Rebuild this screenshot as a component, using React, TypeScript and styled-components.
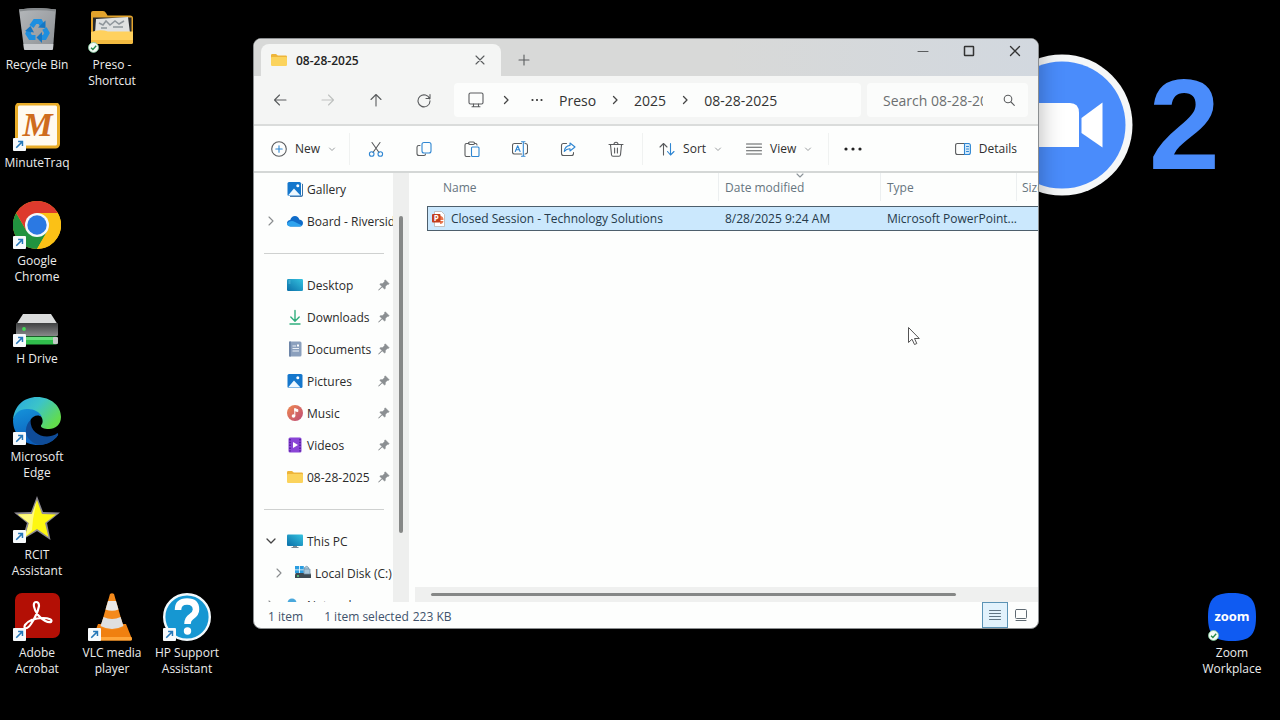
import React from "react";
import styled, { createGlobalStyle, css } from "styled-components";

const GlobalStyle = createGlobalStyle`
  *, *::before, *::after { box-sizing: border-box; }
  body {
    margin: 0;
    background: #000;
    font-family: "Open Sans", "Noto Sans", sans-serif;
    font-size: 12px;
    color: #2b2b2b;
  }
  button, input { font: inherit; color: inherit; }
  svg { display: block; flex: none; }
`;

/* ---------- Desktop ---------- */

const Desktop = styled.main`
  position: relative;
  display: flex;
  justify-content: space-between;
  align-items: flex-start;
  min-height: 100vh;
  overflow: hidden;
  background: #000;
`;

const ShortcutGrid = styled.div<{ $edge?: boolean }>`
  display: grid;
  grid-auto-flow: column;
  grid-template-rows: repeat(7, 98px);
  grid-auto-columns: 74px;
  column-gap: 1px;
  ${(p) => p.$edge && css`margin-right: 11px;`}
`;

const ShortcutButton = styled.button<{ $row: number; $col: number }>`
  grid-row: ${(p) => p.$row};
  grid-column: ${(p) => p.$col};
  display: flex;
  flex-direction: column;
  align-items: center;
  gap: 4px;
  padding: 5px 0 0;
  border: 0;
  background: none;
  color: #ececec;
  line-height: 16px;
  text-align: center;
`;

const IconFrame = styled.span`
  position: relative;
  display: block;
  width: 48px;
  height: 48px;
`;

const Badge = styled.span`
  position: absolute;
  left: 0;
  bottom: 0;
`;

const ShortcutLabel = styled.span`
  white-space: pre;
`;

const Wallpaper = styled.div`
  position: absolute;
  top: 54px;
  right: 60px;
  display: flex;
  align-items: center;
  gap: 16px;
`;

const RoomNumber = styled.span`
  font-family: "Liberation Sans Narrow", "Liberation Sans", sans-serif;
  font-weight: 700;
  font-size: 128px;
  line-height: 142px;
  color: #4a8cfb;
`;

/* ---------- Window ---------- */

const Window = styled.section`
  position: absolute;
  top: 38px;
  right: 241px;
  bottom: 91px;
  left: 253px;
  display: flex;
  flex-direction: column;
  border: 1px solid #8b8e90;
  border-radius: 8px;
  overflow: hidden;
  background: #fdfefd;
  box-shadow: 0 0 24px rgba(0, 0, 0, 0.3);
`;

const TitleBar = styled.header`
  flex: none;
  display: flex;
  align-items: flex-end;
  height: 37px;
  padding-left: 7px;
  background: linear-gradient(90deg, #d8d9d8 60%, #d2d8df);
`;

const Tab = styled.div`
  display: flex;
  align-items: center;
  width: 240px;
  height: 32px;
  padding: 0 10px;
  gap: 9px;
  border-radius: 8px 8px 0 0;
  background: #f4f5f4;
  font-weight: 600;
  color: #222;
`;

const TabTitle = styled.span`
  flex: 1;
`;

const PlainButton = styled.button<{ $w: number; $h: number }>`
  display: inline-flex;
  align-items: center;
  justify-content: center;
  flex: none;
  width: ${(p) => p.$w}px;
  height: ${(p) => p.$h}px;
  padding: 0;
  border: 0;
  background: none;
`;

const CaptionButtons = styled.div`
  display: flex;
  align-self: flex-start;
  margin-left: auto;
`;

const NavBar = styled.nav`
  flex: none;
  display: flex;
  align-items: center;
  height: 50px;
  padding: 0 10px 0 2px;
  border-bottom: 2px solid #dadcdb;
  background: #f4f5f4;
`;

const AddressBar = styled.div`
  flex: 1;
  display: flex;
  align-items: center;
  height: 34px;
  margin: 0 6px;
  padding-left: 8px;
  border-radius: 4px;
  background: #fcfdfc;
  overflow: hidden;
`;

const Crumb = styled.a`
  padding: 0 7px;
  font-size: 14px;
  color: #333;
  text-decoration: none;
  white-space: nowrap;
`;

const SearchBox = styled.label`
  display: flex;
  align-items: center;
  gap: 20px;
  width: 161px;
  height: 34px;
  padding: 0 13px 0 16px;
  border-radius: 4px;
  background: #fbfcfb;
`;

const SearchInput = styled.input`
  flex: 1;
  min-width: 0;
  padding: 0;
  border: 0;
  outline: 0;
  background: none;
  font-size: 14px;
  &::placeholder { color: #6c6f70; opacity: 1; }
`;

const Toolbar = styled.div`
  flex: none;
  display: flex;
  align-items: center;
  height: 47px;
  border-bottom: 2px solid #d4d7d6;
  background: #fdfefd;
`;

const ToolGroup = styled.div<{ $pad: string; $end?: boolean }>`
  display: flex;
  align-items: center;
  gap: 24px;
  padding: ${(p) => p.$pad};
  ${(p) => (p.$end ? css`margin-left: auto;` : css`border-right: 1px solid #f0f2f1;`)}
`;

const ToolButtons = styled.div`
  display: flex;
`;

const ToolButton = styled.button`
  display: flex;
  align-items: center;
  gap: 8px;
  height: 32px;
  padding: 0;
  border: 0;
  background: none;
  color: #2f2f2f;
`;

const Body = styled.div`
  flex: 1;
  display: flex;
  min-height: 0;
`;

const Sidebar = styled.aside`
  flex: none;
  width: 139px;
  overflow: hidden;
`;

const TreeList = styled.ul`
  margin: 0;
  padding: 0;
  list-style: none;
`;

const TreeRow = styled.li<{ $depth?: number }>`
  display: flex;
  align-items: center;
  height: 32px;
  padding-left: ${(p) => 9 + (p.$depth || 0) * 8}px;
  white-space: nowrap;
`;

const TreeChevron = styled.span`
  flex: none;
  width: 24px;
`;

const TreeLink = styled.a`
  flex: 1;
  display: flex;
  align-items: center;
  gap: 4px;
  min-width: 0;
  color: #2b2b2b;
  text-decoration: none;
  overflow: hidden;
`;

const PinSlot = styled.span`
  flex: none;
  width: 15px;
`;

const TreeDivider = styled.li`
  display: flex;
  align-items: center;
  height: 32px;
  padding: 0 9px 0 10px;
  &::before { content: ""; flex: 1; height: 1px; background: #cfd1d0; }
`;

const SideScroll = styled.div`
  flex: none;
  display: flex;
  justify-content: center;
  width: 16px;
  padding: 43px 0 69px;
  background: #eeefee;
`;

const ThumbV = styled.div`
  width: 4px;
  border-radius: 2px;
  background: #868887;
`;

const Main = styled.div`
  flex: 1;
  display: flex;
  flex-direction: column;
  min-width: 0;
  padding-left: 6px;
`;

const TableArea = styled.div`
  flex: 1;
  padding-left: 12px;
  overflow: hidden;
`;

const FileTable = styled.table`
  width: 690px;
  table-layout: fixed;
  border-collapse: separate;
  border-spacing: 0;
`;

const HeadCell = styled.th<{ $w: number; $pad: number }>`
  position: relative;
  width: ${(p) => p.$w}px;
  height: 33px;
  padding: 0 0 4px ${(p) => p.$pad}px;
  font-weight: 400;
  text-align: left;
  color: #66757f;
  background: linear-gradient(#eceff0, #eceff0) right top / 1px 28px no-repeat;
`;

const SortMark = styled.span`
  position: absolute;
  top: 0;
  left: 50%;
  margin-left: -4px;
`;

const Cell = styled.td<{ $pad: number }>`
  height: 25px;
  padding: 0 0 0 ${(p) => p.$pad}px;
  border-top: 1px solid #4d5f6c;
  border-bottom: 1px solid #4d5f6c;
  background: #cbe8fd;
  color: #263a4a;
  white-space: nowrap;
  &:first-child { border-left: 1px solid #4d5f6c; }
`;

const FileName = styled.span`
  display: flex;
  align-items: center;
  gap: 4px;
`;

const BottomScroll = styled.div`
  flex: none;
  display: flex;
  align-items: center;
  height: 15px;
  padding: 0 82px 0 16px;
  background: #eff0ef;
`;

const ThumbH = styled.div`
  flex: 1;
  height: 3px;
  border-radius: 2px;
  background: #858786;
`;

const StatusBar = styled.footer`
  flex: none;
  display: flex;
  align-items: center;
  height: 26px;
  padding: 0 4px 0 14px;
  color: #40526b;
`;

const StatusText = styled.span<{ $after: number }>`
  padding-top: 2px;
  margin-right: ${(p) => p.$after}px;
`;

const ViewButton = styled.button<{ $on?: boolean }>`
  display: flex;
  align-items: center;
  justify-content: center;
  width: 26px;
  height: 26px;
  padding: 0;
  border: 1px solid ${(p) => (p.$on ? "#5b93b5" : "transparent")};
  background: ${(p) => (p.$on ? "#e2f2fc" : "none")};
`;

const ViewButtons = styled.div`
  display: flex;
  margin-left: auto;
`;

const Cursor = styled.svg`
  position: absolute;
  top: 326px;
  left: 907px;
`;

/* ---------- Small icons ---------- */

type StrokeProps = { w?: number; h?: number; c?: string; sw?: number; children: React.ReactNode };
const Stroke = ({ w = 16, h = 16, c = "#5a5c5e", sw = 1.1, children }: StrokeProps) => (
  <svg width={w} height={h} viewBox={`0 0 ${w} ${h}`} fill="none" stroke={c} strokeWidth={sw} strokeLinecap="round" strokeLinejoin="round" aria-hidden="true">
    {children}
  </svg>
);

const ChevronDown = () => <Stroke w={8} h={8} c="#9a9d9f" sw={1}><path d="M1.5 3 4 5.5 6.500 3" /></Stroke>;
const ChevronRight = () => <Stroke w={8} h={12} c="#444" sw={1.3}><path d="M2.500 2.500l3.500 3.500-3.500 3.500" /></Stroke>;
const BLUE = "#2f86d2";

const FolderIcon = () => (
  <svg width="16" height="16" viewBox="0 0 16 16" aria-hidden="true">
    <path d="M0 3.200Q0 2 1.200 2H5l1.800 1.600H14.800Q16 3.600 16 4.800V8H0z" fill="#eeb53a" />
    <path d="M0 6Q0 5 1 5H15Q16 5 16 6V12.800Q16 14 14.800 14H1.200Q0 14 0 12.800z" fill="#fbd35c" />
  </svg>
);

const PictureIcon = ({ stacked }: { stacked?: boolean }) => (
  <svg width="16" height="16" viewBox="0 0 16 16" aria-hidden="true">
    {stacked && <path d="M14 2.500H15.200V14.500H3V15.800H14.500Q16 15.800 16 14V3z" fill="#0c4f8f" />}
    <rect x="0.500" y="1" width={stacked ? 13.5 : 15} height="14" rx="1.500" fill="#1577cc" />
    <path d="M1 14.500 7 7.500 13.500 14.500z" fill="#eef8ff" />
    <circle cx="10.800" cy="4.800" r="1.500" fill="#fff" />
  </svg>
);

const CloudIcon = () => (
  <svg width="16" height="16" viewBox="0 0 16 16" aria-hidden="true">
    <path d="M3.500 13.500Q0 13 0 10 .3 7.300 3.200 7 4.500 3 8 3q3.300.2 4.300 3.500Q16 7 16 10q-.2 3.300-3.200 3.500z" fill="#0f6cc9" />
    <path d="M3.500 13.500Q0 13 0 10.500 4 6.500 8 9l7 3.500q-.8 1-2.200 1z" fill="#2ea3ee" />
  </svg>
);

const DesktopIcon = () => (
  <svg width="16" height="16" viewBox="0 0 16 16" aria-hidden="true">
    <defs><linearGradient id="dk" x1="0" y1="1" x2="1" y2="0"><stop stopColor="#0b6fa8" /><stop offset="1" stopColor="#35c3e0" /></linearGradient></defs>
    <rect y="2" width="16" height="12" rx="1.200" fill="url(#dk)" />
    <path d="M1.500 4h2M1.500 6h2" stroke="#7fd3ea" strokeWidth=".7" />
  </svg>
);

const DownloadIcon = () => <Stroke c="#2fae7d" sw={1.4}><path d="M8 1.500V12M3.800 8 8 12.200 12.200 8M3 15H13" /></Stroke>;

const DocumentIcon = () => (
  <svg width="16" height="16" viewBox="0 0 16 16" aria-hidden="true">
    <rect x="2" y=".5" width="12.500" height="15" rx="1.500" fill="#8ba0bd" />
    <rect x="2" y=".5" width="2" height="15" fill="#6e86a8" />
    <path d="M5.500 5h3.500M5.500 7.500h6.500M5.500 10h6.500" stroke="#e9eff6" strokeWidth="1" />
    <rect x="10" y="3.500" width="2" height="2" fill="#fff" />
  </svg>
);

const MusicIcon = () => (
  <svg width="16" height="16" viewBox="0 0 16 16" aria-hidden="true">
    <defs><linearGradient id="mu" x1="0" y1="0" x2="1" y2="1"><stop stopColor="#ef8a4f" /><stop offset="1" stopColor="#bd4a78" /></linearGradient></defs>
    <circle cx="8" cy="8" r="8" fill="url(#mu)" />
    <path d="M7.800 3.200v8M7.800 3.700l3 .9V6.600L7.800 5.700z" stroke="#fff" fill="#fff" strokeWidth="1" />
    <circle cx="6.500" cy="11" r="1.800" fill="#fff" />
  </svg>
);

const VideoIcon = () => (
  <svg width="16" height="16" viewBox="0 0 16 16" aria-hidden="true">
    <rect x="1.500" y=".5" width="13" height="15" rx="1.500" fill="#8a45d6" />
    <path d="M3 2v12.500M13 2v12.500" stroke="#4b1c92" strokeWidth="1.400" strokeDasharray="1.500 1.300" />
    <path d="M6 5v6l5-3z" fill="#fff" />
  </svg>
);

const MonitorIcon = () => (
  <svg width="16" height="16" viewBox="0 0 16 16" aria-hidden="true">
    <rect x="6" y="12" width="4" height="2.500" fill="#7e8a93" />
    <path d="M4.500 14.500h7" stroke="#7e8a93" />
    <rect x="0" y="1.500" width="16" height="11.500" rx="1" fill="url(#dk)" />
  </svg>
);

const DiskIcon = () => (
  <svg width="16" height="16" viewBox="0 0 16 16" aria-hidden="true">
    <path d="M0 1h4v3.500H0zM4.800 1h4v3.500h-4zM0 5.200h4v3H0zM4.800 5.200h4v3h-4z" fill="#2b9de0" />
    <path d="M1 8h14l1 1.500V13H0V9.500z" fill="#3e4a52" />
    <path d="M9.500 4V2.500q2.500-2.500 4 0V4M9 4h6v5H9z" fill="#a9c7da" stroke="#6f8ea3" strokeWidth=".7" />
    <circle cx="3" cy="11" r=".9" fill="#61e08a" />
  </svg>
);

const NetworkIcon = () => (
  <svg width="16" height="16" viewBox="0 0 16 16" aria-hidden="true">
    <circle cx="5" cy="6" r="4.500" fill="#4aa8dc" />
    <rect x="4" y="5" width="12" height="9" rx="1" fill="#1d84bf" />
  </svg>
);

const PinIcon = () => (
  <svg width="12" height="12" viewBox="0 0 12 12" aria-hidden="true">
    <path d="M7.300.8 11.200 4.700 10.200 5.500 9.300 5.400 7.500 7.300 7.200 9.800 6.500 10 4.200 7.900 1.200 10.900.6 11.200.9 10.600 3.900 7.500 1.900 5.400 2.200 4.700 4.700 4.500 6.600 2.600 6.500 1.600z" fill="#8b8f92" stroke="#8b8f92" strokeWidth=".5" />
  </svg>
);

const PowerPointIcon = () => (
  <svg width="16" height="16" viewBox="0 0 16 16" aria-hidden="true">
    <path d="M3.500 .5H10.500l3 3v12H3.500z" fill="#fff" stroke="#b9b2ae" strokeWidth=".8" />
    <path d="M9 5q3.500 0 3.500 4H9zM9 10h3.500q-.5 3-3.500 3z" fill="#e9784f" />
    <rect x="1" y="3" width="8.500" height="8.500" rx="1" fill="#c43e1c" />
    <text x="5.300" y="10" fontSize="8" fontWeight="700" fill="#fff" textAnchor="middle" fontFamily="Open Sans, sans-serif">P</text>
  </svg>
);

/* ---------- Desktop artwork ---------- */

const ArrowBadge = () => (
  <svg width="13" height="13" viewBox="0 0 14 14" aria-hidden="true">
    <rect width="14" height="14" rx="1" fill="#f7fafc" />
    <path d="M3.500 10.500 9.800 4.200M5.500 3.800H10.200V8.500" fill="none" stroke="#2477b8" strokeWidth="1.600" />
  </svg>
);

const CheckBadge = () => (
  <svg width="11" height="11" viewBox="0 0 11 11" aria-hidden="true">
    <circle cx="5.500" cy="5.500" r="5" fill="#f4fbf5" stroke="#7fc79a" strokeWidth=".8" />
    <path d="M3 5.700 4.900 7.500 8.200 3.800" fill="none" stroke="#21884a" strokeWidth="1.300" />
  </svg>
);

const Art = ({ children }: { children: React.ReactNode }) => (
  <svg width="48" height="48" viewBox="0 0 48 48" aria-hidden="true">{children}</svg>
);

const RecycleArt = () => (
  <Art>
    <defs><linearGradient id="rb" x1="0" y1="0" x2="1" y2="1"><stop stopColor="#b4b7ba" /><stop offset="1" stopColor="#8c9094" /></linearGradient></defs>
    <path d="M6 4.500Q24 1.500 43 4.500L40 44Q39.800 45 38.500 45H12.500Q11.200 45 11 44z" fill="url(#rb)" />
    <path d="M6 4.500Q24 1.500 43 4.500L42.800 6.500Q24 4 6.200 6.500z" fill="#85898c" />
    <path d="M10.500 39H40.300L40 44Q39.800 45 38.500 45H12.500Q11.200 45 11 44z" fill="#c9cccf" />
    <g fill="none" stroke="#1d8fe0" strokeWidth="5">
      <path d="M18.500 21.500 22 16.500H27L29 20" />
      <path d="M31.500 23.500 34 28 31.500 32.500H28" />
      <path d="M22.500 32.500H17.500L15 28.500 16.500 25" />
    </g>
    <g fill="#1577c4">
      <path d="M25 22.500 32.500 23 32.500 15.500z" />
      <path d="M29 27 23.500 32.500 29 38z" />
      <path d="M12 26 17.500 21 21 27.500z" />
    </g>
  </Art>
);

const FolderArt = () => (
  <Art>
    <path d="M3 8Q3 6 5 6H15Q17 6 18 8L19.500 10.500H42Q45 10.500 45 13V38H3z" fill="#e2a32c" />
    <path d="M5 12.500H43.500V28H5z" fill="#26282b" />
    <path d="M8 14 40 12 42 28H7z" fill="#dfe1e1" />
    <path d="M11 18l4 2 3-4 4 4 5-4 4 3 5-3M13 23h6M25 22h10" stroke="#8f969b" strokeWidth="1.500" fill="none" />
    <path d="M3 27Q12 24 20 26.500H45V37Q45 39 43 39H5Q3 39 3 37z" fill="#ffd15e" />
    <path d="M3 35H45V37Q45 39 43 39H5Q3 39 3 37z" fill="#f3bb41" />
  </Art>
);

const MinuteArt = () => (
  <Art>
    <rect x="3.500" y="1" width="42" height="43" rx="3" fill="#fffaf0" stroke="#e9ac28" strokeWidth="3" />
    <text x="24.500" y="33" textAnchor="middle" fontFamily="Liberation Serif, serif" fontWeight="700" fontStyle="italic" fontSize="34" fill="#cf6c1d">M</text>
  </Art>
);

const ChromeArt = () => (
  <Art>
    <circle cx="24" cy="24" r="24" fill="#fbc116" />
    <path d="M3.200 12A24 24 0 0 1 44.800 12H24z" fill="#dd3a2d" />
    <path d="M3.200 12A24 24 0 0 0 24 48L34.400 30 24 24 13.600 30z" fill="#21933f" />
    <path d="M3.200 12 13.600 30 24 12z" fill="#dd3a2d" />
    <path d="M44.800 12A24 24 0 0 1 24 48L34.400 30 24 12z" fill="#fbc116" />
    <circle cx="24" cy="24" r="12" fill="#f4f8fb" />
    <circle cx="24" cy="24" r="9.700" fill="#2b79e3" />
  </Art>
);

const DriveArt = () => (
  <Art>
    <defs><linearGradient id="dr" x1="0" y1="0" x2="0" y2="1"><stop stopColor="#3e4041" /><stop offset="1" stopColor="#88898a" /></linearGradient></defs>
    <path d="M10 15H38L45 26H3z" fill="#dadcdc" />
    <rect x="3" y="24" width="42" height="13" rx="1" fill="url(#dr)" />
    <circle cx="11" cy="30" r="1.900" fill="#42d955" />
    <rect x="8" y="37.500" width="36" height="8" rx="1" fill="#30bd4c" />
    <rect x="8" y="38" width="36" height="3" fill="#67df7b" />
    <rect x="40" y="38" width="5" height="7" rx="1" fill="#c5c9c8" />
  </Art>
);

const EdgeArt = () => (
  <Art>
    <defs>
      <linearGradient id="e1" x1="0" y1="0" x2="1" y2=".6"><stop stopColor="#27a7e3" /><stop offset=".5" stopColor="#3cc4c8" /><stop offset="1" stopColor="#62dc4d" /></linearGradient>
      <linearGradient id="e2" x1="0" y1="0" x2=".4" y2="1"><stop stopColor="#1593da" /><stop offset="1" stopColor="#0b5dbb" /></linearGradient>
    </defs>
    <path d="M0 23C1 9 11 0 24 0 38 0 48 9 48 20 48 28 42 32 36 32 31 32 27.500 30.500 28 28.500 30 26 30 24 29 21 26 16 20 12 13 13 7 14 2 18 0 23z" fill="url(#e1)" />
    <path d="M0 23C2 15 8 11.500 15 12 21 12 27 15 29 20 25 17 20 18.500 17.500 23 14 30 18 39 26 42 34 45 40 41 43.500 37 44.500 36 45.500 37 45 38 41 44 33 48 25 48 11 48 0 38 0 23z" fill="url(#e2)" />
    <path d="M17.500 23C12 28 11 38 17 43 20 46 23 47.500 27 48 35 47.500 41 44 45 38 45.500 37 44.500 36 43.500 37 33 43 17 38 17.500 23z" fill="#0f4c98" />
  </Art>
);

const StarArt = () => (
  <Art>
    <path d="M24 1 30 17 47 17.500 34 28 37.500 45 24 36 9 45 14 28 1 17.500 18 17z" fill="#8d8a92" />
    <path d="M24 5 29 19 43 19.500 32 28 35.500 42 24 34 12 42 16 28 5 19.500 19 19z" fill="#fdf712" />
    <path d="M24 5 19 19 5 19.500 16 28 12 42 19 35 20 24z" fill="#fffb80" />
  </Art>
);

const AcrobatArt = () => (
  <Art>
    <rect x="2" y="0" width="45" height="45" rx="7" fill="#b30f05" />
    <path d="M23 9C19 9 21 17 25 22 29 27 35 30 38 29 40 27 36 25 30 25 22 25 15 28 12 32 10 36 14 37 18 31 22 25 25 18 26 13 26 10 25 9 23 9z" fill="none" stroke="#fff" strokeWidth="2.200" />
  </Art>
);

const VlcArt = () => (
  <Art>
    <path d="M10 31H38L44 46Q44 47.500 42.500 47.500H6Q4 47.500 4.500 46z" fill="#f08010" />
    <path d="M5 44H43.500L44 46Q44 47.500 42.500 47.500H6Q4 47.500 4.500 46z" fill="#ffa63a" />
    <path d="M22 1Q24 -.5 26 1L35.500 34Q24 40 12.500 34z" fill="#f58a1b" />
    <path d="M20 8H28L30.500 16.500Q24 19 17.500 16.500z" fill="#e9e9e8" />
    <path d="M15.500 24Q24 28 32.600 24L35.500 33Q24 39 12.500 33z" fill="#dfe0e0" />
  </Art>
);

const HpArt = () => (
  <Art>
    <circle cx="24" cy="24" r="22.800" fill="#1697d2" stroke="#f3fafd" strokeWidth="2.400" />
    <path d="M15 17Q15 8.500 24 8.500T33 16.500Q33 20.500 28.500 23.500 24.500 26 24.500 31" fill="none" stroke="#fff" strokeWidth="6.500" />
    <circle cx="24.500" cy="38" r="3.700" fill="#fff" />
  </Art>
);

const ZoomArt = () => (
  <Art>
    <path d="M24 0C42 0 48 6 48 24S42 48 24 48 0 42 0 24 6 0 24 0z" fill="#0f5bf2" />
    <text x="24" y="28" textAnchor="middle" fontFamily="Open Sans, sans-serif" fontWeight="700" fontSize="13" fill="#fff">zoom</text>
  </Art>
);

type Shortcut = { label: string; row: number; col: number; art: React.ReactNode; badge?: "arrow" | "check" };

const shortcuts: Shortcut[] = [
  { label: "Recycle Bin", row: 1, col: 1, art: <RecycleArt /> },
  { label: "Preso -\nShortcut", row: 1, col: 2, art: <FolderArt />, badge: "check" },
  { label: "MinuteTraq", row: 2, col: 1, art: <MinuteArt />, badge: "arrow" },
  { label: "Google\nChrome", row: 3, col: 1, art: <ChromeArt />, badge: "arrow" },
  { label: "H Drive", row: 4, col: 1, art: <DriveArt />, badge: "arrow" },
  { label: "Microsoft\nEdge", row: 5, col: 1, art: <EdgeArt />, badge: "arrow" },
  { label: "RCIT\nAssistant", row: 6, col: 1, art: <StarArt />, badge: "arrow" },
  { label: "Adobe\nAcrobat", row: 7, col: 1, art: <AcrobatArt />, badge: "arrow" },
  { label: "VLC media\nplayer", row: 7, col: 2, art: <VlcArt />, badge: "arrow" },
  { label: "HP Support\nAssistant", row: 7, col: 3, art: <HpArt />, badge: "arrow" },
];

const DesktopShortcut = ({ label, row, col, art, badge }: Shortcut) => (
  <ShortcutButton type="button" $row={row} $col={col}>
    <IconFrame>
      {art}
      {badge && <Badge>{badge === "arrow" ? <ArrowBadge /> : <CheckBadge />}</Badge>}
    </IconFrame>
    <ShortcutLabel>{label}</ShortcutLabel>
  </ShortcutButton>
);

/* ---------- Explorer ---------- */

type TreeItemProps = { label: string; icon: React.ReactNode; pinned?: boolean; open?: boolean; closed?: boolean; depth?: number };

const TreeItem = ({ label, icon, pinned, open, closed, depth }: TreeItemProps) => (
  <TreeRow $depth={depth}>
    <TreeChevron>
      {closed && <Stroke w={16} h={12} c="#8a8d8f"><path d="M6 2l4 4-4 4" /></Stroke>}
      {open && <Stroke w={16} h={12} c="#444" sw={1.3}><path d="M4 4l4 4 4-4" /></Stroke>}
    </TreeChevron>
    <TreeLink href="#">{icon}{label}</TreeLink>
    {pinned && <PinSlot><PinIcon /></PinSlot>}
  </TreeRow>
);

const tools = [
  { name: "Cut", icon: <><path d="M4 1.500 11 11.500M12 1.500 5 11.500" /><circle cx="3.700" cy="13" r="2.300" stroke={BLUE} /><circle cx="12.300" cy="13" r="2.300" stroke={BLUE} /></> },
  { name: "Copy", icon: <><path d="M4 4.500H2.800Q1 4.500 1 6.300V12.500Q1 14.500 3 14.500H8Q9.500 14.500 9.500 13" /><rect x="6" y="1.500" width="9" height="10.500" rx="2" stroke={BLUE} /></> },
  { name: "Paste", icon: <><path d="M5 2.500H2.500Q1 2.500 1 4V14Q1 15.500 2.500 15.500H6M10.500 2.500H11.500Q13 2.500 13 4" /><rect x="4.500" y="1" width="6" height="2.500" rx="1.200" /><rect x="7.500" y="6" width="7.500" height="9.500" rx="1" stroke={BLUE} /></> },
  { name: "Rename", icon: <><path d="M9.500 2.500H2.500Q.5 2.500.5 4.500V11Q.5 13 2.500 13H9.500M13 2.500Q15.500 2.500 15.500 4.500V11Q15.500 13 13 13" /><path d="M3.300 10.500 5.700 4.800 8.100 10.500M4.200 8.700H7.200M11.300 1V15M9.500.8H13M9.500 15.200H13" stroke={BLUE} /></> },
  { name: "Share", icon: <><path d="M6.500 2.500H3.500Q1.500 2.500 1.500 4.500V12.500Q1.500 14.500 3.500 14.500H11.500Q13.500 14.500 13.500 12.500V11.500" /><path d="M10 2 15 6 10 10V7.700Q6.500 7.500 4.300 10.500 4.800 5 10 4.400z" stroke={BLUE} /></> },
  { name: "Delete", icon: <path d="M1 3.500H15M6 3.300Q6 1.200 8 1.200T10 3.300M2.500 3.800 3.500 13.800Q3.700 15.300 5 15.300H11Q12.300 15.300 12.500 13.800L13.500 3.800M6.600 7V12M9.400 7V12" /> },
];

export default function App() {
  return (
    <Desktop>
      <GlobalStyle />
      <ShortcutGrid>
        {shortcuts.map((s) => <DesktopShortcut key={s.label} {...s} />)}
      </ShortcutGrid>
      <Wallpaper>
        <svg width="142" height="142" viewBox="0 0 142 142" aria-hidden="true">
          <circle cx="71" cy="71" r="70.500" fill="#f5f7f8" />
          <circle cx="71" cy="71" r="63.500" fill="#4a8cfb" />
          <path d="M29 49H79Q88 49 88 59V93H39Q29 93 29 83z" fill="#fff" />
          <path d="M90.500 64 111.500 48.500V93.500L90.500 79z" fill="#fff" />
        </svg>
        <RoomNumber>2</RoomNumber>
      </Wallpaper>
      <ShortcutGrid $edge>
        <DesktopShortcut label={"Zoom\nWorkplace"} row={7} col={1} art={<ZoomArt />} badge="check" />
      </ShortcutGrid>

      <Window aria-label="08-28-2025">
        <TitleBar>
          <Tab>
            <FolderIcon />
            <TabTitle>08-28-2025</TabTitle>
            <PlainButton type="button" aria-label="Close tab" $w={22} $h={22}>
              <Stroke w={10} h={10}><path d="M1 1l8 8M9 1l-8 8" /></Stroke>
            </PlainButton>
          </Tab>
          <PlainButton type="button" aria-label="New tab" $w={46} $h={32}>
            <Stroke w={12} h={12}><path d="M6 1v10M1 6h10" /></Stroke>
          </PlainButton>
          <CaptionButtons>
            <PlainButton type="button" aria-label="Minimize" $w={46} $h={24}>
              <Stroke w={12} h={12}><path d="M1 6.500h10" /></Stroke>
            </PlainButton>
            <PlainButton type="button" aria-label="Maximize" $w={46} $h={24}>
              <Stroke w={12} h={12} sw={1.5} c="#333"><rect x="1.500" y="1.500" width="9" height="9" rx=".5" /></Stroke>
            </PlainButton>
            <PlainButton type="button" aria-label="Close" $w={46} $h={24}>
              <Stroke w={12} h={12} sw={1.3} c="#333"><path d="M1.500 1.500l9 9M10.500 1.500l-9 9" /></Stroke>
            </PlainButton>
          </CaptionButtons>
        </TitleBar>

        <NavBar aria-label="Folder navigation">
          <PlainButton type="button" aria-label="Back" $w={48} $h={36}>
            <Stroke><path d="M14 8H2.500M7.500 3l-5 5 5 5" /></Stroke>
          </PlainButton>
          <PlainButton type="button" aria-label="Forward" $w={48} $h={36}>
            <Stroke c="#bfc1c0"><path d="M2 8h11.500M8.500 3l5 5-5 5" /></Stroke>
          </PlainButton>
          <PlainButton type="button" aria-label="Up" $w={48} $h={36}>
            <Stroke><path d="M8 14V2.500M3 7.500l5-5 5 5" /></Stroke>
          </PlainButton>
          <PlainButton type="button" aria-label="Refresh" $w={48} $h={36}>
            <Stroke><path d="M13.700 7A6 6 0 1 0 14 8.800M14 2.500V6.500H10" /></Stroke>
          </PlainButton>
          <AddressBar>
            <PlainButton type="button" aria-label="This PC" $w={28} $h={32}>
              <Stroke><rect x="1" y="1" width="14" height="11" rx="1.500" /><path d="M5.500 12v2.500M10.500 12v2.500M4 14.800h8" /></Stroke>
            </PlainButton>
            <PlainButton type="button" aria-label="Show folders" $w={32} $h={32}><ChevronRight /></PlainButton>
            <PlainButton type="button" aria-label="More locations" $w={30} $h={32}>
              <svg width="12" height="4" viewBox="0 0 12 4" fill="#333"><circle cx="1.500" cy="2" r="1.100" /><circle cx="6" cy="2" r="1.100" /><circle cx="10.500" cy="2" r="1.100" /></svg>
            </PlainButton>
            <Crumb href="#">Preso</Crumb>
            <PlainButton type="button" aria-label="Folders in Preso" $w={24} $h={32}><ChevronRight /></PlainButton>
            <Crumb href="#">2025</Crumb>
            <PlainButton type="button" aria-label="Folders in 2025" $w={24} $h={32}><ChevronRight /></PlainButton>
            <Crumb href="#">08-28-2025</Crumb>
          </AddressBar>
          <SearchBox>
            <SearchInput type="text" aria-label="Search" placeholder="Search 08-28-2025" />
            <Stroke w={12} h={12}><circle cx="5" cy="5" r="3.800" /><path d="M8 8l3.300 3.300" /></Stroke>
          </SearchBox>
        </NavBar>

        <Toolbar role="toolbar" aria-label="Commands">
          <ToolGroup $pad="0 13px 0 17px">
            <ToolButton type="button">
              <Stroke><circle cx="8" cy="8" r="7.300" /><path d="M8 4.800v6.400M4.800 8h6.400" stroke={BLUE} /></Stroke>
              New
              <ChevronDown />
            </ToolButton>
          </ToolGroup>
          <ToolGroup $pad="0 2px">
            <ToolButtons>
              {tools.map((t) => (
                <PlainButton key={t.name} type="button" aria-label={t.name} $w={48} $h={32}>
                  <Stroke>{t.icon}</Stroke>
                </PlainButton>
              ))}
            </ToolButtons>
          </ToolGroup>
          <ToolGroup $pad="0 16px">
            <ToolButton type="button">
              <Stroke><path d="M4.500 14V2.500M1 6l3.500-3.500L8 6" /><path d="M11.500 2.500V14M8.500 10.500l3 3.500 3.500-3.500" stroke={BLUE} /></Stroke>
              Sort
              <ChevronDown />
            </ToolButton>
            <ToolButton type="button">
              <Stroke><path d="M.5 3h15M.5 6.300h15M.5 9.700h15M.5 13h15" /></Stroke>
              View
              <ChevronDown />
            </ToolButton>
          </ToolGroup>
          <PlainButton type="button" aria-label="See more" $w={48} $h={32}>
            <svg width="18" height="4" viewBox="0 0 18 4" fill="#222"><circle cx="2" cy="2" r="1.600" /><circle cx="9" cy="2" r="1.600" /><circle cx="16" cy="2" r="1.600" /></svg>
          </PlainButton>
          <ToolGroup $pad="0 21px 0 0" $end>
            <ToolButton type="button">
              <Stroke><path d="M9.500 2.500H2.500Q.6 2.500.6 4.500V11.500Q.6 13.500 2.500 13.500H9.500" /><path d="M9.500 2.500H13.500Q15.400 2.500 15.400 4.500V11.500Q15.400 13.500 13.500 13.500H9.500zM11.500 5.500h2M11.500 8h2M11.500 10.500h2" stroke={BLUE} fill="#d4eafa" /></Stroke>
              Details
            </ToolButton>
          </ToolGroup>
        </Toolbar>

        <Body>
          <Sidebar aria-label="Folders">
            <TreeList>
              <TreeItem label="Gallery" icon={<PictureIcon stacked />} />
              <TreeItem label="Board - Riverside" icon={<CloudIcon />} closed />
              <TreeDivider />
              <TreeItem label="Desktop" icon={<DesktopIcon />} pinned />
              <TreeItem label="Downloads" icon={<DownloadIcon />} pinned />
              <TreeItem label="Documents" icon={<DocumentIcon />} pinned />
              <TreeItem label="Pictures" icon={<PictureIcon />} pinned />
              <TreeItem label="Music" icon={<MusicIcon />} pinned />
              <TreeItem label="Videos" icon={<VideoIcon />} pinned />
              <TreeItem label="08-28-2025" icon={<FolderIcon />} pinned />
              <TreeDivider />
              <TreeItem label="This PC" icon={<MonitorIcon />} open />
              <TreeItem label="Local Disk (C:)" icon={<DiskIcon />} closed depth={1} />
              <TreeItem label="Network" icon={<NetworkIcon />} closed />
            </TreeList>
          </Sidebar>
          <SideScroll><ThumbV /></SideScroll>
          <Main>
            <TableArea>
              <FileTable>
                <thead>
                  <tr>
                    <HeadCell $w={292} $pad={16}>Name</HeadCell>
                    <HeadCell $w={162} $pad={6}>
                      Date modified
                      <SortMark><Stroke w={8} h={6} c="#8c9499"><path d="M1 1l3 3 3-3" /></Stroke></SortMark>
                    </HeadCell>
                    <HeadCell $w={136} $pad={6}>Type</HeadCell>
                    <HeadCell $w={100} $pad={5}>Size</HeadCell>
                  </tr>
                </thead>
                <tbody>
                  <tr aria-selected="true">
                    <Cell $pad={3}><FileName><PowerPointIcon />Closed Session - Technology Solutions</FileName></Cell>
                    <Cell $pad={6}>8/28/2025 9:24 AM</Cell>
                    <Cell $pad={6}>Microsoft PowerPoint...</Cell>
                    <Cell $pad={5} />
                  </tr>
                </tbody>
              </FileTable>
            </TableArea>
            <BottomScroll><ThumbH /></BottomScroll>
          </Main>
        </Body>

        <StatusBar>
          <StatusText $after={21}>1 item</StatusText>
          <StatusText $after={4}>1 item selected</StatusText>
          <StatusText $after={0}>223 KB</StatusText>
          <ViewButtons>
            <ViewButton type="button" aria-label="Details view" $on>
              <Stroke w={12} h={12} sw={1} c="#5f7482"><path d="M.5 1.500h11M.5 4.500h11M.5 7.500h11M.5 10.500h11" /></Stroke>
            </ViewButton>
            <ViewButton type="button" aria-label="Large icons view">
              <Stroke w={12} h={12} sw={1} c="#5f6a72"><rect x=".5" y=".5" width="11" height="9" rx="1" /><path d="M1 11.500h10" /></Stroke>
            </ViewButton>
          </ViewButtons>
        </StatusBar>
      </Window>

      <Cursor width="14" height="20" viewBox="0 0 14 20" aria-hidden="true">
        <path d="M1.500 1.500V16.500L5 13.200 7.500 18.500 9.800 17.500 7.500 12.500H12.300z" fill="#fff" stroke="#555" strokeWidth="1" />
      </Cursor>
    </Desktop>
  );
}
